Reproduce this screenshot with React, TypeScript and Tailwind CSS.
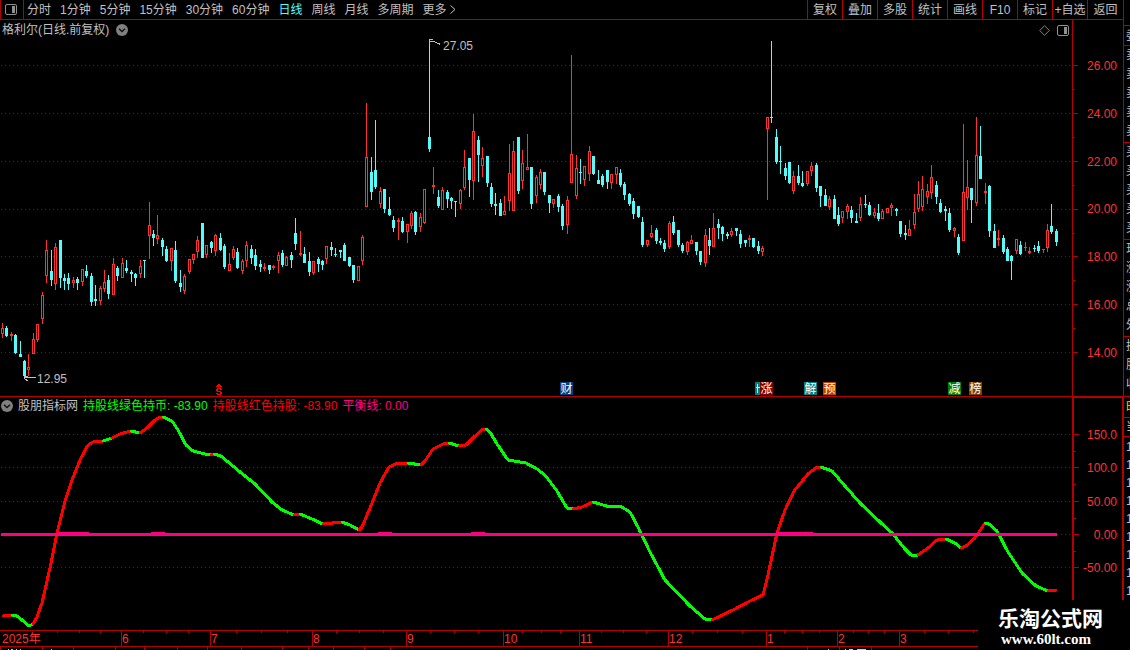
import type { ReactNode } from "react";

type Side = "r" | "c";
// side, x, high, body top, body bottom, low
type Candle = [Side, number, number, number, number, number];
type Point = [number, number];

const PLOT_WIDTH = 1072;
const PRICE_TOP = 38;
const PRICE_HEIGHT = 358;
const IND_TOP = 414;
const IND_HEIGHT = 216;

const CANDLES: Candle[] = [
  ["r", 2, 323, 328, 334, 338], ["c", 6, 326, 328, 336, 337], ["r", 11, 332, 334, 336, 341],
  ["c", 15, 334, 335, 353, 354], ["c", 20, 341, 354, 357, 357], ["c", 24, 360, 361, 376, 376],
  ["r", 28, 354, 367, 370, 376], ["r", 33, 333, 339, 354, 354], ["r", 37, 324, 324, 340, 342],
  ["r", 42, 292, 295, 319, 324], ["r", 46, 240, 250, 276, 283], ["c", 51, 250, 271, 280, 286],
  ["r", 55, 243, 247, 284, 290], ["c", 60, 240, 240, 278, 288], ["c", 64, 274, 278, 281, 290],
  ["c", 68, 273, 278, 284, 290], ["r", 73, 277, 280, 283, 288], ["c", 77, 277, 279, 283, 290],
  ["r", 82, 269, 269, 282, 286], ["c", 86, 265, 271, 276, 278], ["c", 91, 273, 276, 302, 306],
  ["c", 95, 285, 299, 301, 306], ["r", 100, 286, 288, 301, 305], ["r", 104, 270, 282, 289, 292],
  ["c", 108, 275, 280, 294, 299], ["r", 113, 258, 264, 295, 295], ["c", 117, 266, 268, 276, 281],
  ["r", 122, 258, 263, 278, 278], ["c", 126, 260, 268, 271, 273], ["c", 131, 270, 272, 274, 282],
  ["c", 135, 273, 274, 278, 286], ["r", 140, 260, 266, 274, 278], ["c", 144, 260, 260, 261, 278],
  ["r", 149, 202, 225, 236, 259], ["c", 153, 230, 234, 238, 246], ["r", 157, 215, 235, 239, 244],
  ["c", 162, 238, 240, 247, 256], ["c", 166, 246, 249, 261, 262], ["r", 171, 248, 248, 261, 271],
  ["c", 175, 241, 250, 281, 283], ["c", 180, 270, 283, 287, 292], ["r", 184, 274, 276, 291, 294],
  ["r", 189, 259, 259, 272, 274], ["r", 193, 254, 254, 260, 264], ["r", 197, 236, 240, 252, 258],
  ["c", 202, 223, 223, 258, 258], ["r", 206, 245, 245, 255, 258], ["c", 211, 241, 242, 248, 253],
  ["r", 215, 234, 235, 251, 256], ["c", 220, 233, 238, 250, 251], ["c", 224, 244, 246, 267, 269],
  ["r", 229, 253, 264, 271, 271], ["r", 233, 246, 249, 258, 260], ["c", 237, 248, 252, 268, 269],
  ["r", 242, 259, 261, 271, 274], ["r", 246, 241, 245, 261, 267], ["c", 251, 245, 249, 258, 264],
  ["c", 255, 249, 255, 266, 270], ["c", 260, 260, 264, 267, 272], ["r", 264, 263, 267, 269, 271],
  ["c", 269, 265, 265, 270, 274], ["r", 273, 265, 266, 268, 270], ["r", 278, 252, 255, 261, 273],
  ["c", 282, 250, 253, 265, 267], ["r", 286, 256, 257, 266, 266], ["c", 291, 252, 255, 260, 268],
  ["c", 295, 218, 233, 244, 250], ["r", 300, 231, 253, 255, 256], ["c", 304, 247, 254, 263, 263],
  ["c", 309, 252, 261, 272, 276], ["r", 313, 261, 261, 273, 275], ["c", 318, 257, 259, 264, 272],
  ["c", 322, 260, 261, 265, 270], ["r", 326, 246, 246, 259, 264], ["c", 331, 242, 247, 250, 256],
  ["c", 335, 248, 254, 255, 257], ["c", 340, 250, 250, 252, 258], ["c", 344, 243, 245, 261, 261],
  ["c", 349, 257, 257, 266, 267], ["c", 353, 265, 265, 280, 283], ["r", 358, 266, 266, 281, 281],
  ["r", 362, 235, 237, 261, 265], ["r", 366, 103, 157, 207, 207], ["c", 371, 157, 172, 192, 200],
  ["c", 375, 120, 170, 187, 189], ["r", 380, 187, 191, 204, 208], ["c", 384, 189, 189, 209, 213],
  ["c", 389, 197, 209, 215, 216], ["c", 393, 216, 220, 228, 232], ["r", 398, 218, 220, 222, 240],
  ["c", 402, 217, 221, 232, 233], ["r", 407, 224, 224, 232, 243], ["r", 411, 211, 213, 226, 229],
  ["c", 415, 211, 212, 232, 235], ["r", 420, 213, 217, 227, 232], ["r", 424, 189, 189, 223, 224],
  ["c", 429, 40, 137, 149, 152], ["r", 433, 167, 185, 187, 194], ["c", 438, 190, 197, 206, 208],
  ["r", 442, 187, 190, 210, 210], ["c", 447, 190, 192, 199, 208], ["c", 451, 197, 198, 201, 209],
  ["c", 455, 201, 201, 202, 217], ["r", 460, 189, 190, 204, 209], ["r", 464, 150, 167, 188, 190],
  ["c", 469, 158, 158, 180, 197], ["r", 473, 114, 131, 181, 200], ["c", 478, 136, 140, 155, 182],
  ["r", 482, 147, 158, 166, 177], ["c", 487, 156, 156, 183, 187], ["c", 491, 183, 187, 204, 207],
  ["c", 495, 193, 204, 206, 215], ["c", 500, 199, 203, 216, 216], ["r", 504, 196, 211, 215, 215],
  ["r", 509, 144, 173, 201, 211], ["r", 513, 141, 151, 211, 211], ["c", 518, 137, 137, 191, 194],
  ["r", 522, 150, 163, 181, 189], ["r", 527, 134, 167, 170, 170], ["c", 531, 167, 167, 204, 209],
  ["r", 536, 175, 177, 196, 203], ["r", 540, 169, 172, 185, 189], ["c", 544, 172, 172, 192, 195],
  ["c", 549, 195, 195, 203, 213], ["r", 553, 199, 199, 204, 208], ["c", 558, 194, 196, 207, 212],
  ["c", 562, 204, 206, 226, 230], ["r", 567, 196, 200, 225, 234], ["r", 571, 55, 154, 183, 183],
  ["r", 576, 155, 168, 196, 199], ["c", 580, 159, 172, 173, 184], ["r", 584, 166, 166, 180, 186],
  ["r", 589, 146, 151, 174, 181], ["c", 593, 156, 156, 174, 175], ["c", 598, 170, 180, 184, 184],
  ["c", 602, 174, 176, 185, 187], ["c", 607, 170, 170, 182, 189], ["r", 611, 174, 174, 183, 189],
  ["r", 616, 167, 167, 175, 184], ["c", 620, 169, 173, 185, 187], ["c", 624, 182, 184, 195, 200],
  ["c", 629, 193, 194, 204, 206], ["c", 633, 198, 201, 214, 219], ["c", 638, 206, 206, 217, 218],
  ["c", 642, 217, 222, 245, 247], ["r", 647, 240, 240, 245, 247], ["r", 651, 225, 233, 237, 238],
  ["c", 656, 228, 230, 241, 244], ["c", 660, 238, 241, 243, 245], ["c", 664, 240, 243, 249, 252],
  ["r", 669, 221, 223, 247, 249], ["c", 673, 216, 222, 233, 235], ["c", 678, 230, 230, 245, 247],
  ["c", 682, 243, 245, 251, 253], ["r", 687, 241, 242, 252, 255], ["r", 691, 235, 240, 244, 244],
  ["c", 696, 242, 242, 251, 255], ["c", 700, 251, 251, 262, 265], ["r", 705, 229, 235, 263, 267],
  ["c", 709, 228, 240, 246, 255], ["r", 713, 213, 228, 247, 247], ["c", 718, 219, 224, 228, 239],
  ["c", 722, 226, 227, 234, 241], ["c", 727, 232, 234, 236, 239], ["r", 731, 228, 231, 235, 237],
  ["c", 736, 228, 228, 231, 236], ["c", 740, 230, 234, 244, 248], ["c", 745, 240, 240, 243, 247],
  ["r", 749, 235, 238, 240, 247], ["c", 753, 238, 238, 247, 248], ["c", 758, 241, 246, 251, 254],
  ["r", 762, 246, 248, 252, 256], ["r", 767, 117, 117, 129, 200], ["c", 771, 41, 117, 118, 123],
  ["c", 776, 129, 137, 162, 164], ["c", 780, 146, 161, 162, 174], ["c", 785, 163, 168, 176, 180],
  ["c", 789, 162, 162, 183, 184], ["r", 793, 171, 176, 191, 194], ["c", 798, 165, 176, 183, 185],
  ["c", 802, 171, 183, 186, 187], ["r", 807, 171, 171, 184, 186], ["r", 811, 162, 166, 171, 176],
  ["c", 816, 163, 165, 188, 192], ["c", 820, 186, 186, 196, 207], ["c", 825, 189, 195, 206, 206],
  ["r", 829, 196, 199, 207, 210], ["c", 834, 195, 199, 219, 219], ["c", 838, 207, 215, 224, 226],
  ["r", 842, 211, 211, 218, 223], ["r", 847, 204, 206, 212, 219], ["c", 851, 206, 210, 218, 223],
  ["c", 856, 213, 221, 223, 223], ["r", 860, 197, 204, 218, 221], ["c", 865, 195, 204, 205, 208],
  ["c", 869, 202, 205, 215, 216], ["r", 874, 208, 212, 216, 218], ["c", 878, 204, 213, 219, 221],
  ["r", 882, 209, 211, 219, 219], ["r", 887, 208, 208, 213, 213], ["r", 891, 203, 205, 208, 216],
  ["c", 896, 208, 209, 211, 216], ["c", 900, 221, 221, 234, 237], ["c", 905, 225, 233, 235, 240],
  ["r", 909, 220, 229, 236, 236], ["r", 914, 194, 212, 225, 229], ["r", 918, 181, 194, 209, 212],
  ["r", 922, 176, 189, 207, 211], ["r", 927, 184, 191, 197, 204], ["r", 931, 165, 177, 193, 199],
  ["c", 936, 181, 185, 197, 204], ["c", 940, 199, 203, 212, 213], ["c", 945, 206, 209, 211, 221],
  ["c", 949, 208, 213, 230, 232], ["r", 954, 227, 228, 231, 237], ["c", 958, 234, 237, 253, 255],
  ["r", 963, 124, 192, 241, 241], ["r", 967, 160, 187, 198, 210], ["c", 971, 188, 188, 200, 223],
  ["r", 976, 117, 155, 203, 206], ["c", 980, 126, 156, 179, 179], ["r", 985, 183, 191, 193, 204],
  ["c", 989, 185, 186, 231, 237], ["c", 994, 224, 231, 248, 248], ["r", 998, 230, 238, 240, 246],
  ["c", 1003, 235, 238, 252, 254], ["c", 1007, 247, 249, 261, 261], ["c", 1011, 255, 256, 261, 280],
  ["r", 1016, 239, 239, 251, 254], ["c", 1020, 241, 245, 254, 255], ["r", 1025, 242, 247, 248, 251],
  ["r", 1029, 247, 251, 253, 254], ["c", 1034, 245, 248, 249, 252], ["c", 1038, 241, 246, 251, 253],
  ["r", 1043, 249, 249, 250, 253], ["r", 1047, 224, 230, 248, 252], ["c", 1051, 204, 226, 232, 234],
  ["c", 1056, 229, 231, 242, 246],
];

// The holding line changes colour whenever its direction turns
const HOLD_LINE: { color: string; points: Point[] }[] = [
  { color: "#ff0000", points: [[3, 616], [12, 615]] },
  { color: "#00ff00", points: [[12, 615], [17, 616], [22, 620], [29, 626], [33, 624]] },
  { color: "#ff0000", points: [[33, 624], [37, 617], [42, 603], [50, 568], [57, 533], [65, 501], [72, 480], [80, 460], [88, 445], [93, 442], [103, 441]] },
  { color: "#00ff00", points: [[103, 441], [112, 438]] },
  { color: "#ff0000", points: [[112, 438], [120, 434], [131, 431]] },
  { color: "#00ff00", points: [[131, 431], [140, 433]] },
  { color: "#ff0000", points: [[140, 433], [147, 428], [155, 420], [160, 417], [163, 417]] },
  { color: "#00ff00", points: [[163, 417], [172, 421], [178, 430], [186, 445], [193, 451], [205, 454], [211, 455]] },
  { color: "#ff0000", points: [[211, 455], [214, 454]] },
  { color: "#00ff00", points: [[214, 454], [221, 456], [240, 472], [255, 484], [272, 502], [282, 510], [294, 515]] },
  { color: "#ff0000", points: [[294, 515], [300, 514]] },
  { color: "#00ff00", points: [[300, 514], [312, 519], [323, 524]] },
  { color: "#ff0000", points: [[323, 524], [342, 522]] },
  { color: "#00ff00", points: [[342, 522], [350, 525], [359, 530]] },
  { color: "#ff0000", points: [[359, 530], [362, 527], [370, 508], [380, 483], [389, 467], [398, 463], [408, 463]] },
  { color: "#00ff00", points: [[408, 463], [421, 465]] },
  { color: "#ff0000", points: [[421, 465], [425, 461], [433, 449], [443, 444], [449, 443]] },
  { color: "#00ff00", points: [[449, 443], [459, 446]] },
  { color: "#ff0000", points: [[459, 446], [466, 445], [474, 437], [483, 429], [486, 429]] },
  { color: "#00ff00", points: [[486, 429], [490, 432], [497, 444], [508, 460], [526, 463], [537, 469], [545, 475], [557, 491], [567, 508], [573, 509]] },
  { color: "#ff0000", points: [[573, 509], [582, 507], [593, 502]] },
  { color: "#00ff00", points: [[593, 502], [610, 507], [620, 506], [630, 512], [638, 527], [650, 552], [665, 580], [690, 606], [705, 619], [712, 620]] },
  { color: "#ff0000", points: [[712, 620], [735, 609], [750, 601], [763, 595], [768, 575], [777, 533], [785, 510], [794, 491], [808, 474], [817, 467], [821, 467]] },
  { color: "#00ff00", points: [[821, 467], [832, 471], [845, 486], [860, 503], [880, 522], [893, 534], [905, 549], [911, 555], [918, 555]] },
  { color: "#ff0000", points: [[918, 555], [928, 548], [937, 540], [946, 539]] },
  { color: "#00ff00", points: [[946, 539], [955, 543], [961, 548]] },
  { color: "#ff0000", points: [[961, 548], [966, 546], [975, 538], [985, 523]] },
  { color: "#00ff00", points: [[985, 523], [989, 524], [997, 531], [1008, 552], [1022, 573], [1036, 586], [1048, 591]] },
  { color: "#ff0000", points: [[1048, 591], [1056, 590]] },
];

const BALANCE_BUMPS: Point[] = [[57, 89], [151, 165], [378, 392], [471, 485], [776, 813]];

const PERIODS = ["分时", "1分钟", "5分钟", "15分钟", "30分钟", "60分钟", "日线", "周线", "月线", "多周期"];
const TOOLS = ["复权", "叠加", "多股", "统计", "画线", "F10", "标记", "+自选"];

const PRICE_LABELS = ["26.00", "24.00", "22.00", "20.00", "18.00", "16.00", "14.00"];
const PRICE_GRID = [65, 113, 161, 209, 256, 304, 352];
const PRICE_MINOR = [89, 137, 185, 233, 280, 328];
const IND_LABELS = ["150.0", "100.0", "50.00", "0.00", "-50.00"];
const IND_GRID = [434, 467, 501, 534, 567];
const IND_MINOR = [451, 484, 518, 551];

const MONTHS = [
  { label: "2025年", x: 0 },
  { label: "6", x: 121 },
  { label: "7", x: 210 },
  { label: "8", x: 312 },
  { label: "9", x: 406 },
  { label: "10", x: 503 },
  { label: "11", x: 579 },
  { label: "12", x: 668 },
  { label: "1", x: 766 },
  { label: "2", x: 837 },
  { label: "3", x: 899 },
];
const WEEK_TICKS = [57, 79, 100, 143, 166, 188, 236, 261, 287, 336, 359, 383, 430, 454, 478, 522, 541, 560, 601, 623, 646, 692, 717, 742, 784, 802, 819, 853, 868, 884, 924, 948, 973];
const FOOT_TICKS = [0, 42, 73, 115, 144, 177, 207, 241, 282, 308, 333, 364, 390, 807, 839, 871];

const EVENTS = [
  { label: "财", x: 560, tone: "bg-[#004080]" },
  { label: "涨", x: 760, tone: "bg-[#800000]" },
  { label: "解", x: 804, tone: "bg-[#008080]" },
  { label: "预", x: 823, tone: "bg-[#c04000]" },
  { label: "减", x: 948, tone: "bg-[#008000]" },
  { label: "榜", x: 969, tone: "bg-[#804000]" },
];

const QUOTE_GROUPS = [
  ["卖", "卖", "卖", "卖", "卖"],
  ["买", "买", "买", "买", "买"],
  ["现", "涨", "涨", "总", "外"],
  ["换", "股", "收"],
];

function leftOf(x: number) {
  return { left: `${(x / PLOT_WIDTH) * 100}%` };
}

function PanelIcon() {
  return (
    <svg className="h-[11px] w-3" viewBox="0 0 12 11" fill="none" aria-hidden="true">
      <rect x="0.5" y="0.5" width="11" height="10" rx="1.5" stroke="#909090" />
      <rect x="7" y="2" width="3" height="7" fill="#909090" />
    </svg>
  );
}

function ChevronBadge() {
  return (
    <svg className="h-3 w-3 shrink-0" viewBox="0 0 12 12" fill="none" aria-hidden="true">
      <circle cx="6" cy="6" r="6" fill="#808080" />
      <path d="M3 4.8 6 7.6 9 4.8" stroke="#101010" strokeWidth="1.4" />
    </svg>
  );
}

function Toolbar() {
  return (
    <header className="flex h-5 shrink-0 border-b border-[#b40000] leading-[18px]">
      <button type="button" aria-label="侧栏" className="flex w-6 shrink-0 items-center border-x border-[#b40000] pl-1">
        <PanelIcon />
      </button>
      <nav className="flex flex-1 gap-[9px] overflow-hidden pl-[3px] whitespace-nowrap">
        {PERIODS.map((name) => (
          <button key={name} type="button" className={name === "日线" ? "text-[#54fcfc]" : ""}>
            {name}
          </button>
        ))}
        <button type="button" className="flex items-center gap-[3px]">
          更多
          <svg className="h-[9px] w-[6px]" viewBox="0 0 6 9" fill="none" stroke="#c0c0c0" aria-hidden="true">
            <path d="M0.5 0.5 5 4.5 0.5 8.5" />
          </svg>
        </button>
      </nav>
      <div className="flex shrink-0">
        {TOOLS.map((name) => (
          <button key={name} type="button" className="w-[35px] border-l border-[#b40000] text-center whitespace-nowrap">
            {name}
          </button>
        ))}
        <button type="button" className="w-9 border-l border-[#b40000] text-center">
          返回
        </button>
      </div>
    </header>
  );
}

function GridLines({ rows }: { rows: number[] }) {
  return (
    <g stroke="#a80000" strokeDasharray="1 3">
      {rows.map((y) => (
        <line key={y} x1={1} x2={PLOT_WIDTH} y1={y + 0.5} y2={y + 0.5} />
      ))}
    </g>
  );
}

function CandleMark({ candle }: { candle: Candle }) {
  const [side, x, high, top, bottom, low] = candle;
  const height = Math.max(bottom - top, 1);
  if (side === "c") {
    return (
      <g fill="#54fcfc">
        <rect x={x} y={high} width={1} height={low - high} />
        <rect x={x - 1} y={top} width={3} height={height} />
      </g>
    );
  }
  return (
    <g fill="#ff3232">
      <rect x={x} y={high} width={1} height={low - high} />
      <rect x={x - 1} y={top} width={3} height={height} />
      {height > 2 && <rect x={x} y={top + 1} width={1} height={height - 2} fill="#000" />}
    </g>
  );
}

function Axis({
  top,
  height,
  major,
  minor,
  children,
}: {
  top: number;
  height: number;
  major: number[];
  minor: number[];
  children: ReactNode;
}) {
  return (
    <div className="flex w-full">
      <svg
        className="h-full w-[5px]"
        viewBox={`0 ${top} 5 ${height}`}
        preserveAspectRatio="none"
        shapeRendering="crispEdges"
        fill="#b40000"
        aria-hidden="true"
      >
        {major.map((y) => (
          <rect key={y} x={0} y={y} width={5} height={1} />
        ))}
        {minor.map((y) => (
          <rect key={y} x={0} y={y} width={2} height={1} />
        ))}
      </svg>
      {children}
    </div>
  );
}

function PricePane() {
  return (
    <section className="flex min-h-0 flex-1 border-b border-[#b40000]">
      <div className="relative flex min-w-0 flex-1 flex-col">
        <div className="flex h-[18px] shrink-0 items-center gap-[7px] pt-[2px] pr-[3px] pl-[2px] leading-4">
          <h1>格利尔(日线.前复权)</h1>
          <button type="button" aria-label="展开">
            <ChevronBadge />
          </button>
          <svg className="ml-auto h-[11px] w-[11px]" viewBox="0 0 11 11" fill="none" stroke="#808080" aria-hidden="true">
            <path d="M5.5 0.7 10.3 5.5 5.5 10.3 0.7 5.5Z" />
          </svg>
          <PanelIcon />
        </div>
        <svg
          className="min-h-0 w-full flex-1"
          viewBox={`0 ${PRICE_TOP} ${PLOT_WIDTH} ${PRICE_HEIGHT}`}
          preserveAspectRatio="none"
          shapeRendering="crispEdges"
          role="img"
          aria-label="日K线"
        >
          <GridLines rows={PRICE_GRID} />
          {CANDLES.map((candle) => (
            <CandleMark key={candle[1]} candle={candle} />
          ))}
          <g stroke="#c0c0c0" fill="none">
            <path d="M433 39.5H429.5V44M430 41.5 434 41.5 440.5 44.5" />
            <path d="M24 377.5H36M24 378.5 28 381M24.5 376V379M24 376.5H28" />
          </g>
          {/* dividend mark */}
          <g fill="#ff0000">
            <rect x={218} y={384} width={2} height={1} />
            <rect x={217} y={385} width={4} height={1} />
            <rect x={216} y={386} width={6} height={1} />
            <rect x={217} y={388} width={4} height={1} />
            <rect x={216} y={389} width={2} height={2} />
            <rect x={220} y={389} width={2} height={1} />
            <rect x={217} y={391} width={4} height={1} />
            <rect x={220} y={392} width={2} height={2} />
            <rect x={216} y={393} width={2} height={1} />
            <rect x={217} y={394} width={4} height={1} />
          </g>
          <rect x={755} y={382} width={5} height={13} fill="#008080" />
          <path d="M757.5 384V393M756 387.5H760" stroke="#e0e0e0" />
        </svg>
        <span className="absolute top-[18px] leading-4" style={leftOf(443)}>
          27.05
        </span>
        <span className="absolute bottom-[9px] leading-4" style={leftOf(37)}>
          12.95
        </span>
        {EVENTS.map((event) => (
          <span
            key={event.label}
            className={`absolute bottom-px h-[13px] w-[13px] text-center leading-[14px] text-white ${event.tone}`}
            style={leftOf(event.x)}
          >
            {event.label}
          </span>
        ))}
      </div>
      <div className="flex w-[51px] border-l border-[#b40000]">
        <Axis top={20} height={376} major={PRICE_GRID} minor={PRICE_MINOR}>
          <div className="flex flex-1 flex-col justify-between pt-[38px] pr-[6px] pb-[35px] text-right leading-4 text-[#ff3232]">
            {PRICE_LABELS.map((label) => (
              <span key={label}>{label}</span>
            ))}
          </div>
        </Axis>
      </div>
    </section>
  );
}

function IndicatorPane() {
  return (
    <section className="flex h-[233px] shrink-0">
      <div className="flex min-w-0 flex-1 flex-col">
        <div className="flex h-[17px] shrink-0 items-center gap-[5px] pl-px leading-4 whitespace-nowrap">
          <button type="button" aria-label="指标">
            <ChevronBadge />
          </button>
          <h2>股朋指标网</h2>
          <span className="text-[#00ff00]">持股线绿色持币: -83.90</span>
          <span className="text-[#ff0000]">持股线红色持股: -83.90</span>
          <span className="text-[#ff0080]">平衡线: 0.00</span>
        </div>
        <svg
          className="min-h-0 w-full flex-1"
          viewBox={`0 ${IND_TOP} ${PLOT_WIDTH} ${IND_HEIGHT}`}
          preserveAspectRatio="none"
          shapeRendering="crispEdges"
          role="img"
          aria-label="持股线"
        >
          <GridLines rows={IND_GRID} />
          {HOLD_LINE.map((segment) => (
            <polyline
              key={segment.points[0].join()}
              points={segment.points.map((p) => p.join(",")).join(" ")}
              fill="none"
              stroke={segment.color}
              strokeWidth={3}
              strokeLinejoin="round"
              strokeLinecap="round"
            />
          ))}
          <g fill="#ff0080">
            <rect x={1} y={533} width={1056} height={3} />
            {BALANCE_BUMPS.map(([from, to]) => (
              <rect key={from} x={from} y={532} width={to - from} height={3} />
            ))}
          </g>
        </svg>
      </div>
      <div className="flex w-[51px] border-t border-r border-l-2 border-[#b40000]">
        <Axis top={398} height={232} major={IND_GRID} minor={IND_MINOR}>
          <div className="flex flex-1 flex-col justify-between pt-[29px] pr-[5px] pb-[54px] text-right leading-4 whitespace-nowrap text-[#ff3232]">
            {IND_LABELS.map((label) => (
              <span key={label}>{label}</span>
            ))}
          </div>
        </Axis>
      </div>
    </section>
  );
}

function TimeAxis() {
  return (
    <footer className="shrink-0">
      <div className="relative h-[17px] border-y border-[#b40000] leading-4 text-[#ff3232]">
        {WEEK_TICKS.map((x) => (
          <i key={x} className="absolute top-0 h-[2px] w-px bg-[#b40000]" style={{ left: `${(x / 1123) * 100}%` }} />
        ))}
        {MONTHS.map((month) => (
          <span
            key={month.label}
            className={`absolute top-0 h-full ${month.x ? "border-l border-[#b40000]" : "pl-[2px]"}`}
            style={{ left: `${(month.x / 1123) * 100}%` }}
          >
            {month.label}
          </span>
        ))}
      </div>
      <svg className="block h-[3px] w-full" viewBox="0 0 1123 3" preserveAspectRatio="none" shapeRendering="crispEdges" aria-hidden="true">
        {FOOT_TICKS.map((x) => (
          <rect key={x} x={x} y={0} width={1} height={3} fill="#b40000" />
        ))}
        <path d="M8 2.5H9M11 2.5H13M16 2.5H17M20 2.5H21M51 2.5H52M828 2.5H829" stroke="#c0c0c0" />
        <path d="M845 2.5H846M849 2.5H853M857 2.5H866" stroke="#54fcfc" />
      </svg>
    </footer>
  );
}

function QuoteEdge() {
  return (
    <aside className="w-[7px] shrink-0 overflow-hidden border-l border-[#b40000] whitespace-nowrap">
      <div className="mt-[25px] h-5 border-t border-[#b40000] pl-[2px] leading-5">委</div>
      {QUOTE_GROUPS.map((group, i) => (
        <div key={i} className="border-t border-[#b40000] pl-[2px]">
          {group.map((name, j) => (
            <div key={j} className="h-[19px] leading-[19px]">
              {name}
            </div>
          ))}
          <div className="h-px" />
        </div>
      ))}
      <div className="mt-px h-[21px] border-t border-[#b40000] pl-[2px] leading-5 text-[#e0e000]">时</div>
      <div className="h-5 border-y border-[#b40000] pl-[2px] leading-[18px]">当</div>
      {Array.from({ length: 9 }, (_, i) => (
        <div key={i} className="h-[18px] pl-[2px] leading-5">
          1
        </div>
      ))}
    </aside>
  );
}

export default function App() {
  return (
    <div className="relative flex h-screen w-full overflow-hidden bg-black font-['Liberation_Sans','Noto_Sans_CJK_SC',sans-serif] text-xs text-[#c0c0c0]">
      <main className="flex min-w-0 flex-1 flex-col">
        <Toolbar />
        <PricePane />
        <IndicatorPane />
        <TimeAxis />
      </main>
      <QuoteEdge />
      <div className="absolute right-0 bottom-0 h-[50px] w-[152px] bg-black pt-[7px] pl-5 text-white">
        <div className="text-[21px] leading-6 font-bold">乐淘公式网</div>
        <div className="pl-[3px] font-['Liberation_Serif',serif] text-[15px] leading-4 font-bold">www.60lt.com</div>
      </div>
    </div>
  );
}
